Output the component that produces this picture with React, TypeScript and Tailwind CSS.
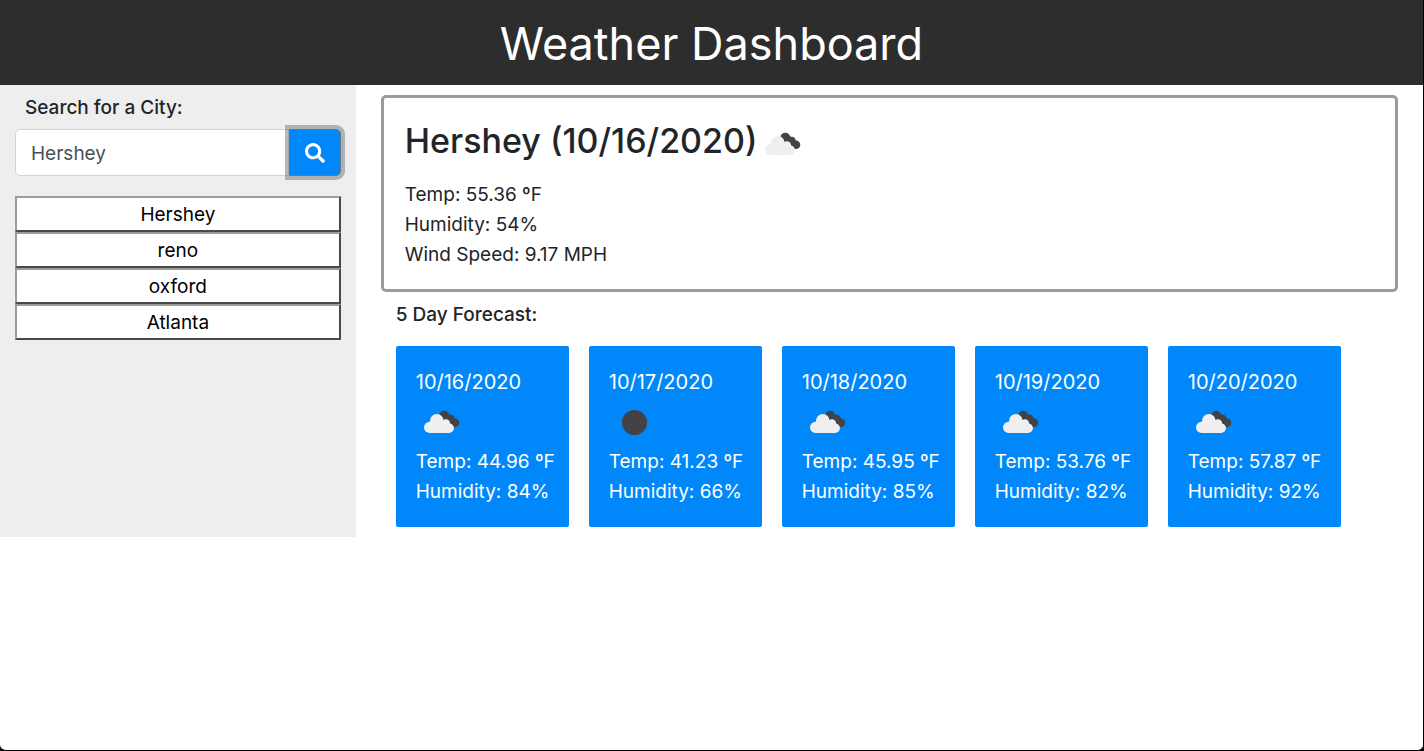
import { useState } from "react";
import { FaSearch } from "react-icons/fa";

type Condition = "clouds" | "clear";

interface ForecastDay {
  date: string;
  condition: Condition;
  temp: string;
  humidity: number;
}

const cities = ["Hershey", "reno", "oxford", "Atlanta"];

const forecast: ForecastDay[] = [
  { date: "10/16/2020", condition: "clouds", temp: "44.96", humidity: 84 },
  { date: "10/17/2020", condition: "clear", temp: "41.23", humidity: 66 },
  { date: "10/18/2020", condition: "clouds", temp: "45.95", humidity: 85 },
  { date: "10/19/2020", condition: "clouds", temp: "53.76", humidity: 82 },
  { date: "10/20/2020", condition: "clouds", temp: "57.87", humidity: 92 },
];

function WeatherIcon({ condition }: { condition: Condition }) {
  if (condition === "clear") {
    return (
      <svg viewBox="0 0 50 50" className="size-[50px] shrink-0" role="img" aria-label="Clear">
        <circle cx="25.5" cy="25.5" r="12.6" fill="#434345" />
      </svg>
    );
  }
  return (
    <svg viewBox="0 0 50 50" className="size-[50px] shrink-0" role="img" aria-label="Cloudy">
      <g fill="#434345">
        <circle cx="28.3" cy="18.6" r="4.9" />
        <circle cx="34.4" cy="21.8" r="4.1" />
        <circle cx="39" cy="25.8" r="4.3" />
        <path d="M25 20l4-5 8 4.4 3 3.6-1 7h-4l-6-5z" />
      </g>
      <g fill="#efefef">
        <circle cx="13.6" cy="30.4" r="5.6" />
        <circle cx="20.8" cy="23.8" r="6.8" />
        <circle cx="29.8" cy="26.6" r="4.4" />
        <circle cx="33.1" cy="31.2" r="4.8" />
        <path d="M13.6 24.8L21 21l9 4 3.1 11H13.6z" />
      </g>
    </svg>
  );
}

export default function App() {
  const [city, setCity] = useState("Hershey");

  return (
    <div className="flex min-h-screen flex-col bg-black font-['Inter','Liberation_Sans',sans-serif] text-[19px] leading-[30px] text-[#212529]">
      <div className="flex grow flex-col overflow-hidden rounded-b-md border-r border-b border-black bg-white">
        <header className="bg-[#2d2d2d] pt-[14px] pb-[11px] text-center text-white">
          <h1 className="text-[45px] leading-[60px]">Weather Dashboard</h1>
        </header>

        <div className="flex items-stretch">
          <aside className="w-1/4 bg-[#eeeeee] px-[15px] pt-2">
            <form onSubmit={(e) => e.preventDefault()}>
              <label htmlFor="city" className="block px-[10px] font-medium">
                Search for a City:
              </label>
              <div className="mt-[6px] flex h-[47px]">
                <input
                  id="city"
                  type="text"
                  value={city}
                  onChange={(e) => setCity(e.target.value)}
                  className="min-w-0 grow rounded-l-[5px] border border-[#ced4da] bg-white px-[15px] pt-0.5 text-[#495057] outline-none"
                />
                <button
                  type="submit"
                  aria-label="Search"
                  className="flex w-[52px] shrink-0 items-center justify-center rounded-r-[5px] border border-[#6c757d] bg-[#0088fa] text-white shadow-[0_0_0_4px_rgba(108,117,125,0.5)]"
                >
                  <FaSearch size={20} />
                </button>
              </div>
            </form>
            <div className="mt-5 flex flex-col">
              {cities.map((name) => (
                <button
                  key={name}
                  type="button"
                  onClick={() => setCity(name)}
                  className="h-9 border-2 border-t-[#9b9b9b] border-r-[#4a4a4a] border-b-[#4a4a4a] border-l-[#9b9b9b] bg-white pt-0.5 text-black"
                >
                  {name}
                </button>
              ))}
            </div>
          </aside>

          <main className="w-3/4 px-[25px] py-[10px]">
            <section className="rounded-[5px] border-[3px] border-[#9b9b9b] px-[21px] pt-[15px] pb-[19px]">
              <div className="flex h-14 items-center">
                <h2 className="text-[34px] leading-[42px] font-medium">Hershey (10/16/2020)</h2>
                <div className="self-end">
                  <WeatherIcon condition="clouds" />
                </div>
              </div>
              <div className="mt-[11px]">
                <p>Temp: 55.36 ºF</p>
                <p>Humidity: 54%</p>
                <p>Wind Speed: 9.17 MPH</p>
              </div>
            </section>

            <section className="px-[15px] pt-2">
              <h3 className="font-medium">5 Day Forecast:</h3>
              <div className="mt-4 flex gap-5">
                {forecast.map((day) => (
                  <article
                    key={day.date}
                    className="w-[173px] rounded-[2px] bg-[#0088fa] pt-[21px] pb-5 pl-5 whitespace-nowrap text-white"
                  >
                    <h4 className="text-[20px]">{day.date}</h4>
                    <WeatherIcon condition={day.condition} />
                    <p>Temp: {day.temp} ºF</p>
                    <p>Humidity: {day.humidity}%</p>
                  </article>
                ))}
              </div>
            </section>
          </main>
        </div>
      </div>
    </div>
  );
}
